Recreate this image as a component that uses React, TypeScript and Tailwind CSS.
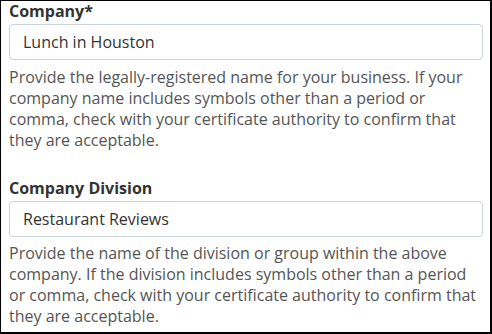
import React from "react";

function Field({
  label,
  value,
  help,
  first,
}: {
  label: string;
  value: string;
  help: string;
  first?: boolean;
}) {
  return (
    <div className={first ? "" : "mt-[27px]"}>
      <div className="text-[16px] leading-[21px] font-bold text-[#333333]">{label}</div>
      <div className="mt-[2px] h-[36px] rounded-[4px] border border-[#c7d3dd] bg-white pl-[13px] flex items-center text-[16px] text-[#333333]">
        {value}
      </div>
      <p className={(first ? "mt-[7px] " : "mt-[6px] ") + "text-[16px] leading-[21px] text-[#555555]"}>{help}</p>
    </div>
  );
}

export default function App() {
  return (
    <div
      className="w-[492px] h-[334px] bg-white border-l border-t border-r-2 border-b-2 border-black pl-2 pr-[7px]"
      style={{ fontFamily: '"Open Sans", sans-serif' }}
    >
      <Field
        first
        label="Company*"
        value="Lunch in Houston"
        help="Provide the legally-registered name for your business. If your company name includes symbols other than a period or comma, check with your certificate authority to confirm that they are acceptable."
      />
      <Field
        label="Company Division"
        value="Restaurant Reviews"
        help="Provide the name of the division or group within the above company. If the division includes symbols other than a period or comma, check with your certificate authority to confirm that they are acceptable."
      />
    </div>
  );
}
